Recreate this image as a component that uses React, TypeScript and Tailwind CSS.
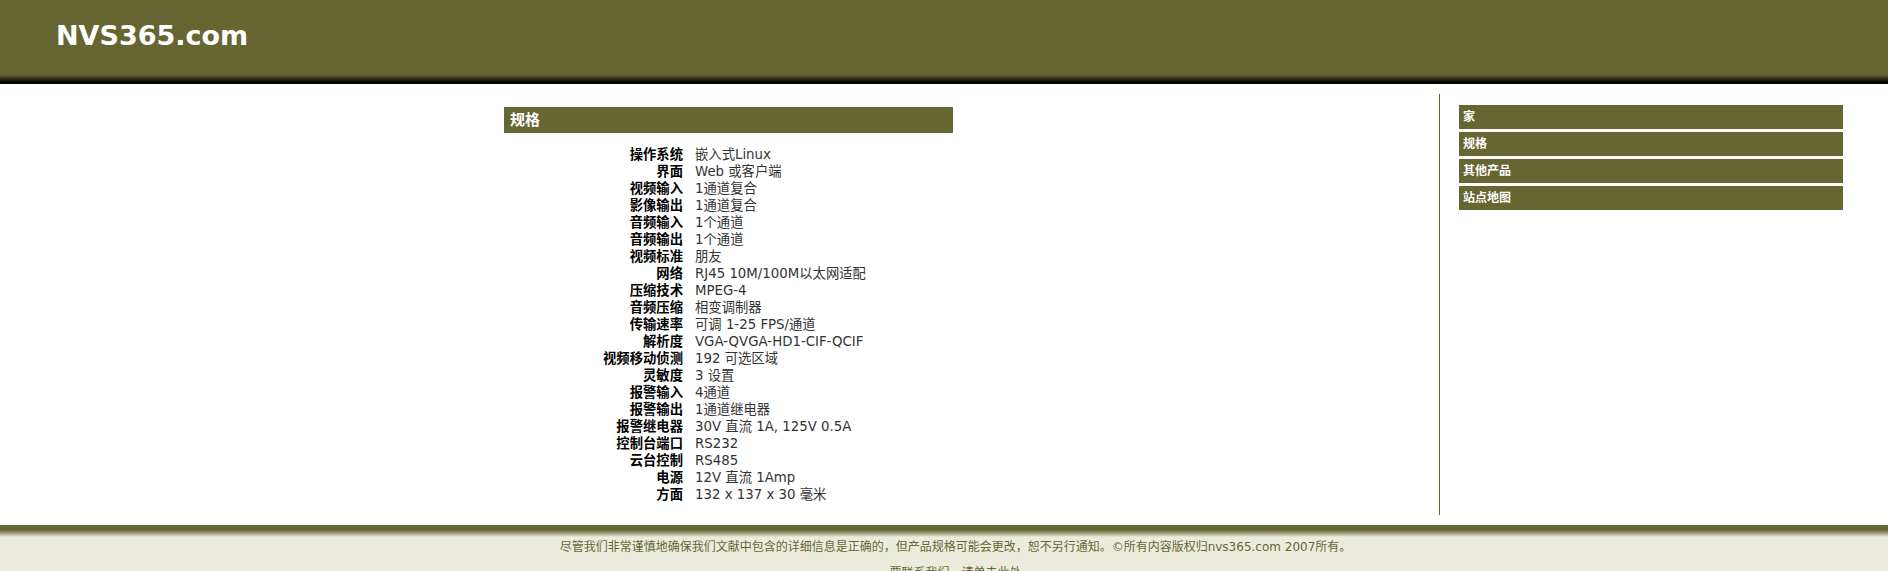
const specs: [string, string][] = [
  ["操作系统", "嵌入式Linux"],
  ["界面", "Web 或客户端"],
  ["视频输入", "1通道复合"],
  ["影像输出", "1通道复合"],
  ["音频输入", "1个通道"],
  ["音频输出", "1个通道"],
  ["视频标准", "朋友"],
  ["网络", "RJ45 10M/100M以太网适配"],
  ["压缩技术", "MPEG-4"],
  ["音频压缩", "相变调制器"],
  ["传输速率", "可调 1-25 FPS/通道"],
  ["解析度", "VGA-QVGA-HD1-CIF-QCIF"],
  ["视频移动侦测", "192 可选区域"],
  ["灵敏度", "3 设置"],
  ["报警输入", "4通道"],
  ["报警输出", "1通道继电器"],
  ["报警继电器", "30V 直流 1A, 125V 0.5A"],
  ["控制台端口", "RS232"],
  ["云台控制", "RS485"],
  ["电源", "12V 直流 1Amp"],
  ["方面", "132 x 137 x 30 毫米"],
];

const navItems = ["家", "规格", "其他产品", "站点地图"];

export default function App() {
  return (
    <div className="w-[1888px] h-[571px] overflow-hidden bg-white font-['DejaVu_Sans','Noto_Sans_CJK_SC',sans-serif]">
      {/* header */}
      <div>
        <div className="h-[75px] bg-[#666633] pl-[56px] pt-[22px]">
          <h1 className="text-[27px] leading-[27px] font-bold text-white">NVS365.com</h1>
        </div>
        <div className="h-[9px] bg-linear-to-b from-[#666633] to-black"></div>
      </div>

      {/* main */}
      <div className="flex py-[10px]">
        <div className="w-[1440px] h-[421px] border-r border-[#666633] flex justify-center pl-[18px]">
          <div className="w-[449px] mt-[13px]">
            <div className="h-[26px] bg-[#666633] pl-[6px] flex items-center">
              <h2 className="text-[15px] font-bold text-white">规格</h2>
            </div>
            <div className="mt-[13px] grid grid-cols-[179px_1fr] gap-x-3 text-[13.33px] leading-[17px]">
              {specs.map(([label, value]) => (
                <div key={label} className="contents">
                  <div className="text-right font-bold text-black">{label}</div>
                  <div className="text-[#333333] whitespace-nowrap">{value}</div>
                </div>
              ))}
            </div>
          </div>
        </div>
        <div className="flex-1 pl-[19px] pt-[11px]">
          <ul className="w-[384px] flex flex-col gap-[3px]">
            {navItems.map((item) => (
              <li
                key={item}
                className="h-[24px] bg-[#666633] pl-1 flex items-center text-[12px] font-bold text-white"
              >
                {item}
              </li>
            ))}
          </ul>
        </div>
      </div>

      {/* footer */}
      <div className="bg-[#ececdd]">
        <div className="h-[5px] bg-[#666633]"></div>
        <div className="h-[7px] bg-linear-to-b from-[#666633] to-[#ececdd]"></div>
        <div className="text-center text-[12px] leading-[15px] text-[#666633] pt-[3px] pl-[23px]">
          <p>
            尽管我们非常谨慎地确保我们文献中包含的详细信息是正确的，但产品规格可能会更改，恕不另行通知。©所有内容版权归nvs365.com 2007所有。
          </p>
          <p className="mt-[11px]">
            要联系我们，<a className="text-[#666633]">请单击此处</a>
          </p>
        </div>
      </div>
    </div>
  );
}
